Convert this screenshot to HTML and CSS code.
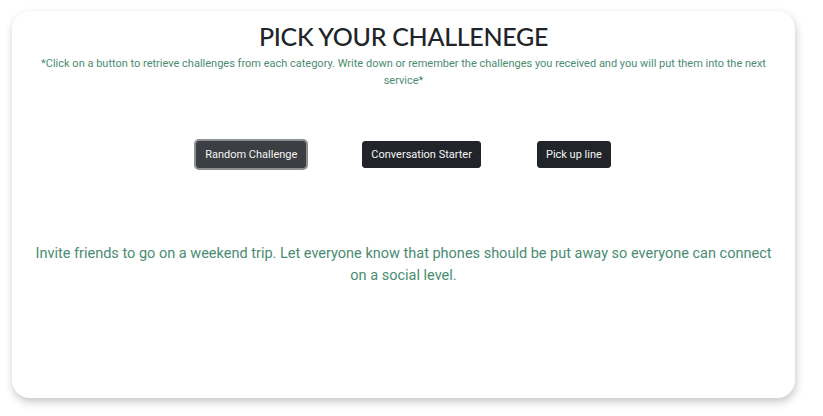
FILE: index.html
```html
<!DOCTYPE html>
<html>
<head>
<meta charset="utf-8">
<link rel="stylesheet" href="styles.css">
</head>
<body>
<div class="card">
  <h1 class="title">PICK YOUR CHALLENEGE</h1>
  <p class="intro">*Click on a button to retrieve challenges from each category. Write down or remember the challenges you received and you will put them into the next service*</p>
  <div class="buttons">
    <button class="btn btn-focus">Random Challenge</button>
    <button class="btn">Conversation Starter</button>
    <button class="btn">Pick up line</button>
  </div>
  <p class="result">Invite friends to go on a weekend trip. Let everyone know that phones should be put away so everyone can connect on a social level.</p>
</div>
</body>
</html>
```
FILE: styles.css
```css
html, body {
  margin: 0;
  padding: 0;
  background: #ffffff;
}
body {
  padding: 11px 28px 18px 12px;
  font-family: Roboto, "Liberation Sans", sans-serif;
}
.card {
  height: 387px;
  box-sizing: border-box;
  background: #fff;
  border-radius: 18px;
  box-shadow: 1px 4px 8px rgba(0, 0, 0, 0.22);
  padding: 10px 20px 0;
  text-align: center;
}
.title {
  margin: 0;
  font-family: Lato, "Liberation Sans", sans-serif;
  font-weight: 500;
  font-size: 25px;
  line-height: 30px;
  color: #212529;
  letter-spacing: -0.3px;
}
.intro {
  margin: 4px 0 0;
  font-size: 11px;
  line-height: 17px;
  color: #4a8c71;
}
.buttons {
  display: flex;
  justify-content: center;
  gap: 56px;
  margin-top: 52px;
}
.btn {
  font-family: Roboto, "Liberation Sans", sans-serif;
  font-size: 11px;
  line-height: 17px;
  padding: 4px 8px;
  color: #f5f5f5;
  background: #212529;
  border: 1px solid #212529;
  border-radius: 3px;
}
.btn-focus {
  background: #3b3e42;
  border-color: #3b3e42;
  box-shadow: 0 0 0 2px #8d8f91;
}
.result {
  margin: 75px 0 0;
  font-size: 14.5px;
  line-height: 22px;
  color: #4a8c71;
}
```
